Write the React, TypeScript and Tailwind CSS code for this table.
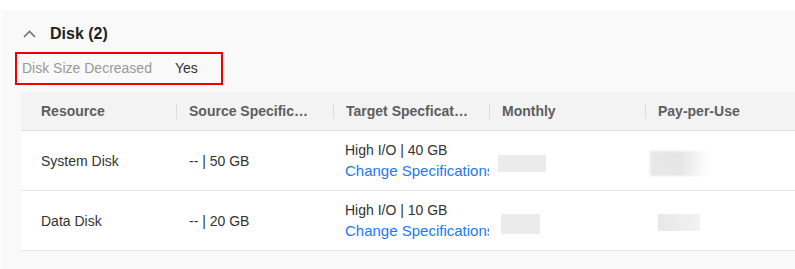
import React from "react";

const font = { fontFamily: '"Liberation Sans", Arial, sans-serif' };

function HeadCell({ text, first }: { text: string; first?: boolean }) {
  return (
    <div className="flex items-center h-full min-w-0">
      {!first && <span className="w-px h-4 bg-[#dcdcdc] shrink-0" />}
      <span className={`${first ? "pl-5" : "pl-3"} pr-5 truncate font-bold text-[14px] text-[#5e5e5e]`}>
        {text}
      </span>
    </div>
  );
}

function Row({
  resource,
  source,
  target,
  m,
  p,
}: {
  resource: string;
  source: string;
  target: string;
  m: { ml: string; w: string; h: string; mt: string };
  p: { ml: string; w: string; h: string; mt: string; fade?: boolean };
}) {
  return (
    <div className="grid grid-cols-[155px_157px_156px_156px_1fr] h-[60px] bg-white border-b border-[#e6e6e6] text-[14px] text-[#333333]">
      <div className="flex items-center pl-5 pt-[2px]">{resource}</div>
      <div className="flex items-center pl-[13px] pt-[2px]">{source}</div>
      <div className="flex flex-col justify-center pl-3 overflow-hidden whitespace-nowrap">
        <span className="leading-[20px]">{target}</span>
        <span className="text-[15px] leading-[22px] text-[#1a7af8]">Change Specifications</span>
      </div>
      <div className="flex items-start">
        <div className={`${m.ml} ${m.w} ${m.h} ${m.mt} bg-[#ebebeb]`} />
      </div>
      <div className="flex items-start">
        <div
          className={`${p.ml} ${p.w} ${p.h} ${p.mt} ${
            p.fade
              ? "bg-gradient-to-r from-[#e8e8e8] via-[#e6e6e6] to-[#ffffff] blur-[1px]"
              : "bg-gradient-to-r from-[#e8e8e8] to-[#f2f2f2]"
          }`}
        />
      </div>
    </div>
  );
}

export default function App() {
  return (
    <div className="w-[795px] h-[269px] bg-white pt-[10px] overflow-hidden" style={font}>
      <div className="ml-px h-[259px] bg-[#f9f9f9] pt-[13px]">
        <div className="flex items-center h-5 pl-[22px] pt-[1px]">
          <svg width="13" height="8" viewBox="0 0 13 8" className="shrink-0">
            <path d="M1 7 L6.5 1.5 L12 7" fill="none" stroke="#707070" strokeWidth="1.6" />
          </svg>
          <span className="ml-[14px] font-bold text-[16px] text-[#1f1f1f]">Disk (2)</span>
        </div>
        <div className="mt-[9px] ml-[14px] w-[208px] h-[33px] border-2 border-[#ee0000] flex items-center">
          <span className="pl-[5px] text-[14px] text-[#999999]">Disk Size Decreased</span>
          <span className="ml-[23px] text-[14px] text-[#333333]">Yes</span>
        </div>
        <div className="mt-[7px] ml-5">
          <div className="grid grid-cols-[155px_157px_156px_156px_1fr] h-[39px] bg-[#f3f3f3] border-b border-[#e3e3e3]">
            <HeadCell text="Resource" first />
            <HeadCell text="Source Specifications" />
            <HeadCell text="Target Specfications" />
            <HeadCell text="Monthly" />
            <HeadCell text="Pay-per-Use" />
          </div>
          <Row
            resource="System Disk"
            source="-- | 50 GB"
            target="High I/O | 40 GB"
            m={{ ml: "ml-[9px]", w: "w-[48px]", h: "h-[17px]", mt: "mt-[24px]" }}
            p={{ ml: "ml-[5px]", w: "w-[60px]", h: "h-[25px]", mt: "mt-[20px]", fade: true }}
          />
          <Row
            resource="Data Disk"
            source="-- | 20 GB"
            target="High I/O | 10 GB"
            m={{ ml: "ml-[12px]", w: "w-[39px]", h: "h-[20px]", mt: "mt-[23px]" }}
            p={{ ml: "ml-[13px]", w: "w-[42px]", h: "h-[17px]", mt: "mt-[23px]" }}
          />
        </div>
      </div>
    </div>
  );
}
